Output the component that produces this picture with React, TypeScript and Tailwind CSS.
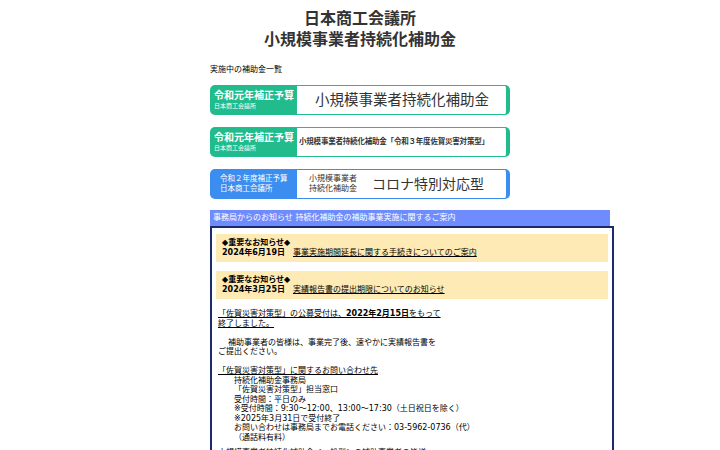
const BODY_FONT = "font-['DejaVu_Sans','Noto_Sans_CJK_JP',sans-serif]";

type Banner = {
  color: string;
  border: string;
  left: React.ReactNode;
  right: React.ReactNode;
};

function SubsidyBanner({ color, border, left, right }: Banner) {
  return (
    <div className="flex h-[30px] w-[300px]">
      <div className={`flex w-[87px] flex-col justify-center rounded-l-[5px] pl-[4px] text-white ${color}`}>
        {left}
      </div>
      <div
        className={`flex flex-1 items-center rounded-r-[5px] border-y border-r-[4px] bg-white text-[#333] ${border}`}
      >
        {right}
      </div>
    </div>
  );
}

function Notice({ date, link }: { date: string; link: string }) {
  return (
    <div className="bg-[#feeab4] px-[6px] pt-[4px] pb-[5px] font-bold text-black">
      <div>◆重要なお知らせ◆</div>
      <div>
        {date}
        {"\u3000"}
        <span className="font-normal underline">{link}</span>
      </div>
    </div>
  );
}

export default function App() {
  return (
    <div className={`min-h-screen bg-white ${BODY_FONT}`}>
      {/* page title */}
      <h1 className="pt-[8px] text-center text-[16px] leading-[21px] font-bold text-[#333]">
        日本商工会議所
        <br />
        小規模事業者持続化補助金
      </h1>

      <div className="ml-[210px] w-[404px]">
        <div className="mt-[15px] text-[8px] leading-[10px] text-black">実施中の補助金一覧</div>

        {/* subsidy banners */}
        <div className="mt-[10px] flex flex-col gap-[12px]">
          <SubsidyBanner
            color="bg-[#22bb8c]"
            border="border-[#22bb8c]"
            left={
              <>
                <div className="text-[10px] leading-[12px] font-bold">令和元年補正予算</div>
                <div className="text-[6px] leading-[8px]">日本商工会議所</div>
              </>
            }
            right={<div className="pl-[18px] text-[14.5px] leading-none">小規模事業者持続化補助金</div>}
          />
          <SubsidyBanner
            color="bg-[#22bb8c]"
            border="border-[#22bb8c]"
            left={
              <>
                <div className="text-[10px] leading-[12px] font-bold">令和元年補正予算</div>
                <div className="text-[6px] leading-[8px]">日本商工会議所</div>
              </>
            }
            right={
              <div className="pl-[2px] text-[7.5px] leading-none font-bold tracking-[-0.2px] whitespace-nowrap">
                小規模事業者持続化補助金「令和３年度佐賀災害対策型」
              </div>
            }
          />
          <SubsidyBanner
            color="bg-[#3b8ef0]"
            border="border-[#3b8ef0]"
            left={
              <div className="pl-[6px] text-[7.5px] leading-[10px]">
                <div>令和２年度補正予算</div>
                <div>日本商工会議所</div>
              </div>
            }
            right={
              <div className="flex items-center pl-[12px]">
                <div className="text-[8px] leading-[10px] text-center">
                  <div>小規模事業者</div>
                  <div>持続化補助金</div>
                </div>
                <div className="ml-[15px] text-[14px] leading-none">コロナ特別対応型</div>
              </div>
            }
          />
        </div>

        {/* news header */}
        <div className="mt-[11px] h-[16px] w-[400px] bg-[#6f8cff] pl-[3px] text-[8px] leading-[16px] text-white">
          事務局からのお知らせ 持続化補助金の補助事業実施に関するご案内
        </div>

        {/* news box */}
        <div className="h-[240px] border-2 border-[#1b2a6b] px-[4px] pt-[6px] text-[8px] leading-[9.5px] text-black">
          <Notice date="2024年6月19日" link="事業実施期間延長に関する手続きについてのご案内" />
          <div className="mt-[9px]">
            <Notice date="2024年3月25日" link="実績報告書の提出期限についてのお知らせ" />
          </div>

          <div className="mt-[10px] px-[2px]">
            <div className="underline">
              「佐賀災害対策型」の公募受付は、<b>2022年2月15日</b>をもって
              <br />
              終了しました。
            </div>

            <div className="mt-[9.5px]">
              <span className="pl-[10px]">補助事業者の皆様は、事業完了後、速やかに実績報告書を</span>
              <br />
              ご提出ください。
            </div>

            <div className="mt-[9.5px]">
              <div className="underline">「佐賀災害対策型」に関するお問い合わせ先</div>
              <div className="pl-[16px]">
                <div>持続化補助金事務局</div>
                <div>「佐賀災害対策型」担当窓口</div>
                <div>受付時間：平日のみ</div>
                <div>※受付時間：9:30～12:00、13:00～17:30（土日祝日を除く）</div>
                <div>※2025年3月31日で受付終了</div>
                <div>お問い合わせは事務局までお電話ください：03-5962-0736（代）</div>
                <div>（通話料有料）</div>
              </div>
            </div>

            <div className="mt-[6px] underline">
              小規模事業者持続化補助金＜一般型＞の補助事業者の皆様へ
            </div>
          </div>
        </div>
      </div>
    </div>
  );
}
